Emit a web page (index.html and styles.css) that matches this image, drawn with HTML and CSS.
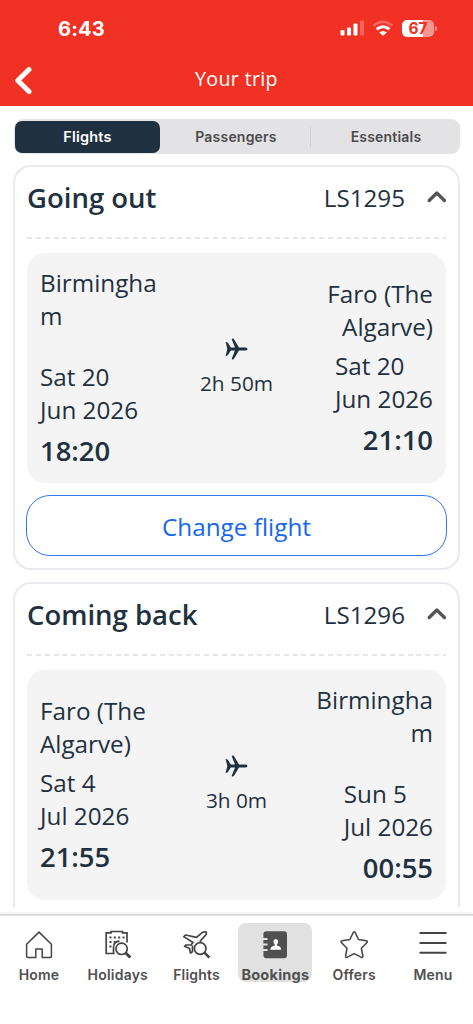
FILE: index.html
```
<!DOCTYPE html>
<html lang="en">
<head>
<meta charset="utf-8">
<title>Your trip</title>
<link rel="stylesheet" href="styles.css">
</head>
<body>
<div class="app">
  <header class="header">
    <div class="status">
      <span class="clock">6:43</span>
      <div class="indicators">
        <svg class="signal" width="25" height="16" viewBox="0 0 25 16" fill="#fff"><rect x="0.5" y="10" width="4" height="5.5" rx="1"/><rect x="7" y="7.5" width="4" height="8" rx="1"/><rect x="13.500" y="3.500" width="4" height="12" rx="1"/><rect x="20" y="0.500" width="4" height="15" rx="1" opacity=".25"/></svg>
        <svg class="wifi" width="22" height="16" viewBox="0 0 22 16" fill="none" stroke="#fff"><path d="M1.500 5.800Q11-2.300 20.500 5.800" stroke-width="2.500" opacity=".25"/><path d="M4.600 9.300Q11 4.300 17.400 9.300" stroke-width="3"/><path d="M7.200 12.600Q11 9.600 14.800 12.600L11 15.800Z" fill="#fff" stroke="none"/></svg>
        <div class="battery"><span class="level">67</span><i class="cap"></i></div>
      </div>
    </div>
    <div class="titlebar">
      <svg class="back" width="18" height="28" viewBox="0 0 18 28" fill="none" stroke="#fff" stroke-width="5" stroke-linecap="round" stroke-linejoin="round"><path d="M15 3.500 3.800 14.500 15 25.500"/></svg>
      <h1 class="title">Your trip</h1>
    </div>
  </header>
  <div class="tabs">
    <span class="tab selected">Flights</span>
    <span class="tab">Passengers</span>
    <span class="tab divided">Essentials</span>
  </div>
  <main class="content">
    <section class="card">
      <div class="card-head">
        <h2 class="direction">Going out</h2>
        <span class="code">LS1295</span>
        <svg class="chevron" width="20" height="14" viewBox="0 0 20 14" fill="none" stroke="#555" stroke-width="3.300" stroke-linecap="round" stroke-linejoin="round"><path d="M3.200 10.500 10.800 3l7.600 7.500"/></svg>
      </div>
      <div class="dashes"></div>
      <div class="panel">
        <div class="stop">
          <div class="place gap">Birmingha<br>m</div>
          <div class="date">Sat 20<br>Jun 2026</div>
          <div class="time">18:20</div>
        </div>
        <div class="duration">
          <svg class="plane" width="23" height="22" viewBox="0 0 23 22" fill="#1f3140"><path d="M.8 4.600Q0 3.900 1.300 4.100L3 4.900 5.800 9.400H10L6.800 1.500Q6.500.5 7.500.5 8.600.5 9 1.300L14 9.400H20.500Q22.500 9.600 22.500 11 22.500 12.300 20.500 12.500H14L9 20.700Q8.600 21.500 7.500 21.500 6.500 21.500 6.800 20.500L10 12.500H5.800L3 17 1.300 17.900Q0 18 .8 17.300L2.300 11Z"/></svg>
          <span>2h 50m</span>
        </div>
        <div class="stop arrive">
          <div class="place">Faro (The<br>Algarve)</div>
          <div class="date">Sat 20<br>Jun 2026</div>
          <div class="time">21:10</div>
        </div>
      </div>
      <div class="change">Change flight</div>
    </section>
    <section class="card">
      <div class="card-head">
        <h2 class="direction">Coming back</h2>
        <span class="code">LS1296</span>
        <svg class="chevron" width="20" height="14" viewBox="0 0 20 14" fill="none" stroke="#555" stroke-width="3.300" stroke-linecap="round" stroke-linejoin="round"><path d="M3.200 10.500 10.800 3l7.600 7.500"/></svg>
      </div>
      <div class="dashes"></div>
      <div class="panel">
        <div class="stop">
          <div class="place">Faro (The<br>Algarve)</div>
          <div class="date">Sat 4<br>Jul 2026</div>
          <div class="time">21:55</div>
        </div>
        <div class="duration">
          <svg class="plane" width="23" height="22" viewBox="0 0 23 22" fill="#1f3140"><path d="M.8 4.600Q0 3.900 1.300 4.100L3 4.900 5.800 9.400H10L6.800 1.500Q6.500.5 7.500.5 8.600.5 9 1.300L14 9.400H20.500Q22.500 9.600 22.500 11 22.500 12.300 20.500 12.500H14L9 20.700Q8.600 21.500 7.500 21.500 6.500 21.500 6.800 20.500L10 12.500H5.800L3 17 1.300 17.900Q0 18 .8 17.300L2.300 11Z"/></svg>
          <span>3h 0m</span>
        </div>
        <div class="stop arrive">
          <div class="place gap">Birmingha<br>m</div>
          <div class="date">Sun 5<br>Jul 2026</div>
          <div class="time">00:55</div>
        </div>
      </div>
    </section>
  </main>
  <nav class="nav">
    <div class="item">
      <svg width="30" height="30" viewBox="0 0 30 30" fill="none" stroke="#444" stroke-width="1.500" stroke-linejoin="round"><path d="M2.600 14.200 15 2.100 27.400 14.200V26.500Q27.400 27.500 26.400 27.500H18.200V19H11.800V27.500H3.600Q2.600 27.500 2.600 26.500Z"/></svg>
      <span>Home</span>
    </div>
    <div class="item">
      <svg width="30" height="30" viewBox="0 0 30 30" fill="none" stroke="#444" stroke-width="1.700"><path d="M11.500 23.500H3.200V2.800H8V1.500H19.500V2.800H24V12.500"/><path d="M6.500 7.500h2m2.300 0h2m2.400 0h2m2.300 0h2M6.500 12h2m2.300 0h2M6.500 16.500h2" stroke-width="2"/><circle cx="18.600" cy="18.800" r="5.700"/><path d="M10.500 23.500V17.500Q10.500 11.500 16.500 11.200"/><path d="m22.800 23 4.500 4.500" stroke-width="3"/></svg>
      <span>Holidays</span>
    </div>
    <div class="item">
      <svg width="30" height="30" viewBox="0 0 30 30" fill="none" stroke="#444" stroke-width="1.700" stroke-linejoin="round"><path d="M10.500 15.500V21.500L8.500 23 7.500 18.500 2.500 16.300 4 15 9 15 11 12.500 1.800 6.600 3.500 5 14.500 7.300 20.500 2.300Q24 1 24.500 3 24.700 4.600 22.300 6.700L18.300 11 19 12.600"/><circle cx="18.200" cy="18.500" r="5.800"/><path d="m22.400 22.700 5 5" stroke-width="2.600"/></svg>
      <span>Flights</span>
    </div>
    <div class="item active">
      <svg width="30" height="30" viewBox="0 0 30 30"><rect x="3.400" y="1.300" width="23.600" height="27" rx="3" fill="#505050"/><path d="M2.500 9h5m-5 5.500h5m-5 5.500h5" stroke="#e1e1e1" stroke-width="2"/><path d="M13.500 11.500Q13.500 9 15.800 9 18.200 9 18.200 11.500 18.200 13.500 17 14.500V15.700Q21 16 21.300 19.700H10.300Q10.600 16 14.700 15.700V14.500Q13.500 13.500 13.500 11.500Z" fill="#fff"/></svg>
      <span>Bookings</span>
    </div>
    <div class="item">
      <svg width="30" height="30" viewBox="0 0 30 30" fill="none" stroke="#444" stroke-width="1.500" stroke-linejoin="round"><path d="M14.200 2.700Q15.200.9 16.200 2.700L19.500 9.500 27.200 10.700Q29.200 11.200 27.800 12.700L22.400 18.300 23.800 26Q23.900 28 22 27.200L15.200 23.600 8.400 27.200Q6.500 28 6.600 26L8 18.300 2.600 12.700Q1.200 11.200 3.200 10.700L10.900 9.500Z"/></svg>
      <span>Offers</span>
    </div>
    <div class="item">
      <svg width="30" height="30" viewBox="0 0 30 30" stroke="#444" stroke-width="2" stroke-linecap="round"><path d="M2.300 3H27.700M2.300 12.900H27.700M2.300 22.700H27.700"/></svg>
      <span>Menu</span>
    </div>
  </nav>
</div>
</body>
</html>
```
FILE: styles.css
```
* { box-sizing: border-box; }
body { margin: 0; background: #fff; }
.app { width: 473px; height: 1024px; display: flex; flex-direction: column; overflow: hidden; font-family: "Open Sans", sans-serif; color: #1f3140; }
.header { height: 106px; flex: none; background: #f03123; color: #fff; padding-top: 15px; }
.status { height: 26px; display: flex; align-items: center; justify-content: space-between; padding: 0 36px 0 58px; }
.clock { font: 700 20px/26px Inter, sans-serif; padding-top: 1px; letter-spacing: .2px; }
.indicators { display: flex; align-items: center; }
.wifi { margin-left: 7px; }
.battery { display: flex; align-items: center; margin-left: 8px; }
.level { width: 32px; height: 17px; border-radius: 5px; background: linear-gradient(90deg, #fff 67%, #f79790 67%); color: #f03123; font: 700 15.5px/17px Inter, sans-serif; text-align: center; }
.cap { width: 2px; height: 5px; margin-left: 1px; border-radius: 0 2px 2px 0; background: #f79790; }
.titlebar { display: flex; align-items: center; height: 50px; margin-top: 14px; padding: 0 14px; }
.title { flex: 1; margin: -3px 18px 0 0; text-align: center; font-size: 19.6px; font-weight: 500; line-height: 26px; letter-spacing: .35px; }
.tabs { flex: none; display: grid; grid-template-columns: 145px 1fr 1fr; height: 35px; margin: 13px 13px 0 14px; padding: 2px 0 2px 1px; border-radius: 9px; background: #e3e3e5; font: 600 14px/32px Inter, sans-serif; letter-spacing: .2px; color: #4b4b4b; text-align: center; }
.tab + .tab { padding-left: 2px; }
.selected { background: #1f3140; color: #fff; border-radius: 7px; font-size: 14.5px; }
.divided { background: linear-gradient(#d0d0d3, #d0d0d3) 0 50% / 1px 20px no-repeat; }
.content { height: 753px; flex: none; overflow: hidden; padding: 11px 13px 0; display: flex; flex-direction: column; gap: 12px; }
.card { flex: none; height: 405px; border: 2px solid #e9e9ef; border-radius: 18px; padding: 0 12px; }
.card-head { display: flex; align-items: center; height: 60px; }
.direction { flex: 1; margin: 0; font-size: 27.5px; font-weight: 600; }
.code { font-size: 24.2px; }
.chevron { margin-left: 21px; }
.dashes { height: 2px; margin-top: 10px; background: repeating-linear-gradient(90deg, #e4e4e9 0 5px, transparent 5px 8.850px); }
.panel { height: 230px; margin-top: 14px; padding: 0 13px 2px; border-radius: 18px; background: #f4f4f4; display: grid; grid-template-columns: 1fr 90px 1fr; align-items: center; }
.stop { display: flex; flex-direction: column; font-size: 24.25px; line-height: 33px; }
.place { margin-bottom: 6px; }
.gap { margin-bottom: 28px; }
.time { font-size: 27.4px; font-weight: 600; line-height: 35px; margin-top: 7px; }
.arrive { align-items: flex-end; }
.arrive .place { text-align: right; }
.duration { display: flex; flex-direction: column; align-items: center; gap: 9px; font-size: 20.8px; line-height: 28px; }
.change { height: 61px; margin: 12px -1px 0; border: 1px solid #2f78ef; border-radius: 24px; text-align: center; color: #1767ed; font-size: 24.3px; line-height: 61px; }
.nav { flex: 1; margin-top: 7px; border-top: 2px solid #dcdcdc; box-shadow: 0 -1px 2px #ececec; display: grid; grid-template-columns: repeat(6, 74px); justify-content: space-between; align-items: start; padding: 7px 3px 0 2px; }
.item { height: 59px; padding-top: 7px; display: flex; flex-direction: column; align-items: center; gap: 5px; border-radius: 8px; font: 600 14px/19px Inter, sans-serif; letter-spacing: .2px; color: #505050; }
.item svg { flex: none; }
.active { background: #e1e1e1; font-weight: 700; font-size: 14.5px; letter-spacing: .25px; }
```
